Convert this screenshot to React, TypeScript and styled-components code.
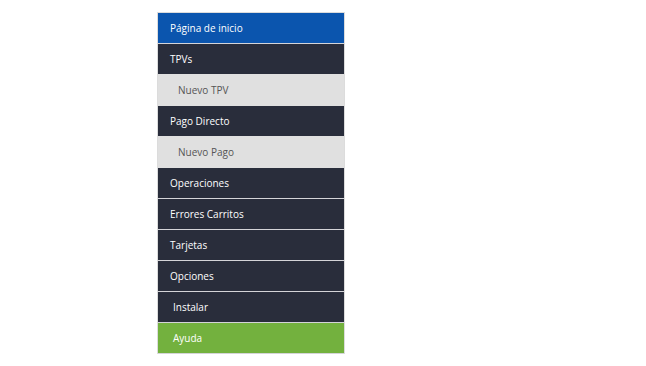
import React from "react";
import styled, { createGlobalStyle } from "styled-components";

const GlobalStyle = createGlobalStyle`
  body {
    margin: 0;
    background: #ffffff;
    font-family: "Open Sans", "Noto Sans", sans-serif;
  }
`;

type Variant = "home" | "main" | "sub" | "help";

type Item = {
  label: string;
  variant: Variant;
  indent?: number;
};

const items: Item[] = [
  { label: "Página de inicio", variant: "home" },
  { label: "TPVs", variant: "main" },
  { label: "Nuevo TPV", variant: "sub" },
  { label: "Pago Directo", variant: "main" },
  { label: "Nuevo Pago", variant: "sub" },
  { label: "Operaciones", variant: "main" },
  { label: "Errores Carritos", variant: "main" },
  { label: "Tarjetas", variant: "main" },
  { label: "Opciones", variant: "main" },
  { label: "Instalar", variant: "main", indent: 15 },
  { label: "Ayuda", variant: "help", indent: 15 },
];

const backgrounds: Record<Variant, string> = {
  home: "#0b55ae",
  main: "#292d3b",
  sub: "#e0e0e0",
  help: "#73b13e",
};

const App = () => {
  return (
    <>
      <GlobalStyle />
      <Page>
        <Menu>
          {items.map((item, i) => {
            const next = items[i + 1];
            // grey rows melt into their neighbours, dark rows get a light rule
            const soft =
              item.variant === "sub" || (!!next && next.variant === "sub");
            return (
              <MenuItem
                key={item.label}
                $variant={item.variant}
                $indent={item.indent}
                $soft={soft}
              >
                {item.label}
              </MenuItem>
            );
          })}
        </Menu>
      </Page>
    </>
  );
};

export default App;

const Page = styled.div`
  width: 646px;
  height: 366px;
  padding: 12px 0 0 157px;
  box-sizing: border-box;
`;

const Menu = styled.ul`
  list-style: none;
  margin: 0;
  padding: 0;
  width: 186px;
  border: 1px solid #dcdcdc;
  border-bottom: none;
`;

const MenuItem = styled.li<{
  $variant: Variant;
  $indent?: number;
  $soft: boolean;
}>`
  height: 30px;
  box-sizing: border-box;
  display: flex;
  align-items: center;
  padding-left: ${(p) => p.$indent ?? (p.$variant === "sub" ? 20 : 12)}px;
  padding-bottom: 1px;
  background: ${(p) => backgrounds[p.$variant]};
  color: ${(p) => (p.$variant === "sub" ? "#555555" : "#ffffff")};
  font-size: 10px;
  font-weight: 500;
  line-height: 1;
  border-bottom: 1px solid ${(p) => (p.$soft ? "#e0e0e0" : "#d4d4d8")};
  height: 31px;
  cursor: pointer;
`;
